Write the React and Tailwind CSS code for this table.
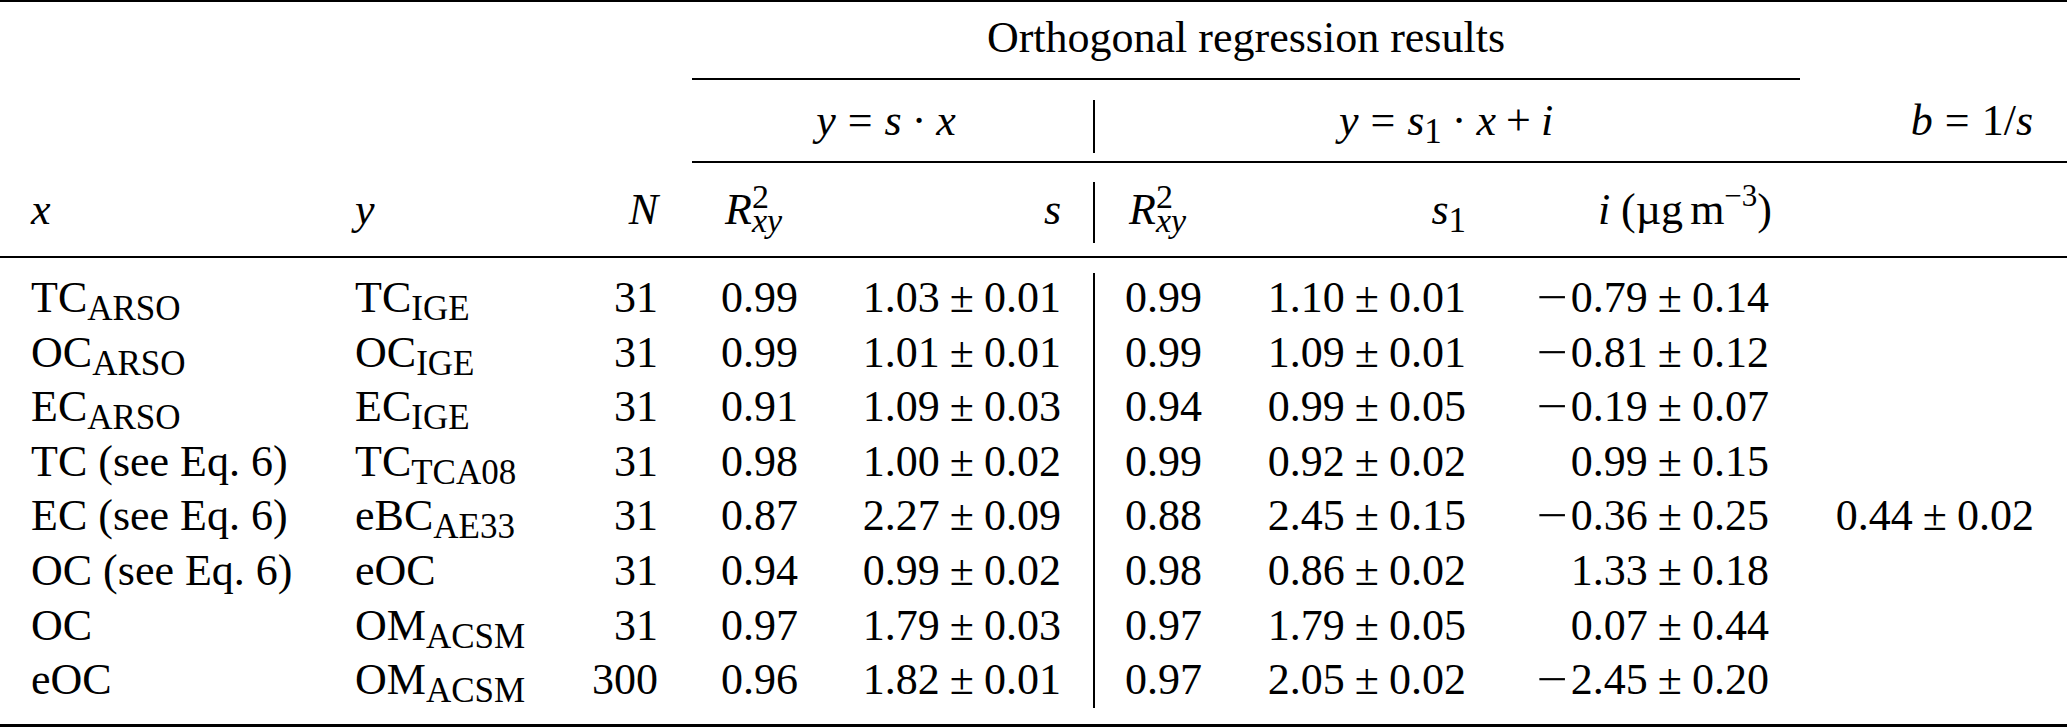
import React from 'react';

// column template shared by every row of the table
const cols = 'grid grid-cols-[340px_220px_110px_130px_280px_28px_132px_250px_310px_267px]';

const rows = [
  { x: ['TC', 'ARSO'], y: ['TC', 'IGE'], n: '31', r1: '0.99', s: ['1.03', '0.01'], r2: '0.99', s1: ['1.10', '0.01'], i: ['−0.79', '0.14'] },
  { x: ['OC', 'ARSO'], y: ['OC', 'IGE'], n: '31', r1: '0.99', s: ['1.01', '0.01'], r2: '0.99', s1: ['1.09', '0.01'], i: ['−0.81', '0.12'] },
  { x: ['EC', 'ARSO'], y: ['EC', 'IGE'], n: '31', r1: '0.91', s: ['1.09', '0.03'], r2: '0.94', s1: ['0.99', '0.05'], i: ['−0.19', '0.07'] },
  { x: ['TC (see Eq. 6)'], y: ['TC', 'TCA08'], n: '31', r1: '0.98', s: ['1.00', '0.02'], r2: '0.99', s1: ['0.92', '0.02'], i: ['0.99', '0.15'] },
  { x: ['EC (see Eq. 6)'], y: ['eBC', 'AE33'], n: '31', r1: '0.87', s: ['2.27', '0.09'], r2: '0.88', s1: ['2.45', '0.15'], i: ['−0.36', '0.25'], b: ['0.44', '0.02'] },
  { x: ['OC (see Eq. 6)'], y: ['eOC'], n: '31', r1: '0.94', s: ['0.99', '0.02'], r2: '0.98', s1: ['0.86', '0.02'], i: ['1.33', '0.18'] },
  { x: ['OC'], y: ['OM', 'ACSM'], n: '31', r1: '0.97', s: ['1.79', '0.03'], r2: '0.97', s1: ['1.79', '0.05'], i: ['0.07', '0.44'] },
  { x: ['eOC'], y: ['OM', 'ACSM'], n: '300', r1: '0.96', s: ['1.82', '0.01'], r2: '0.97', s1: ['2.05', '0.02'], i: ['−2.45', '0.20'] },
];

const Sub = ({ children }) => (
  <span className="text-[35px] leading-[0] align-[-8px]">{children}</span>
);

const Label = ({ parts }) => (
  <>
    {parts[0]}
    {parts[1] && <Sub>{parts[1]}</Sub>}
  </>
);

// the minus in the source is a long math minus sitting tight against the digits
const Num = ({ v }) =>
  v.startsWith('−') ? (
    <>
      <span className="inline-block ml-[6px] mr-[3px] scale-x-125 origin-right">−</span>
      {v.slice(1)}
    </>
  ) : (
    v
  );

const Pm = ({ pair }) => (
  <>
    <Num v={pair[0]} />
    <span className="mx-[10px]">±</span>
    {pair[1]}
  </>
);

const Op = ({ children, wide }) => (
  <span className={wide ? 'mx-[12px]' : 'mx-[10px]'}>{children}</span>
);

const R2 = () => (
  <>
    <span className="italic">R</span>
    <span className="inline-flex flex-col text-[34px] leading-[24px] align-[16px]">
      <span>2</span>
      <span className="italic">xy</span>
    </span>
  </>
);

const Bar = ({ className }) => (
  <div className={'flex justify-center ' + className}>
    <div className="w-[2px] bg-black" />
  </div>
);

export default function App() {
  return (
    <div className="w-[2067px] h-[727px] bg-white text-black font-['Liberation_Serif',serif] text-[44px] flex flex-col overflow-hidden whitespace-nowrap">
      <div className="h-[2px] bg-black" />

      {/* spanner */}
      <div className={`${cols} h-[76px]`}>
        <div className="col-start-4 col-span-6 ml-[22px] text-center leading-[72px]">
          Orthogonal regression results
        </div>
      </div>
      <div className={`${cols} h-[2px]`}>
        <div className="col-start-4 col-span-6 ml-[22px] bg-black" />
      </div>

      {/* model row */}
      <div className={`${cols} h-[81px] leading-[81px]`}>
        <div className="col-start-4 col-span-2 ml-[22px] text-center">
          <span className="italic">y</span>
          <Op wide>=</Op>
          <span className="italic">s</span>
          <Op>·</Op>
          <span className="italic">x</span>
        </div>
        <Bar className="pt-[20px] pb-[8px]" />
        <div className="col-span-3 text-center pr-[16px]">
          <span className="italic">y</span>
          <Op wide>=</Op>
          <span className="italic">s</span>
          <Sub>1</Sub>
          <Op>·</Op>
          <span className="italic">x</span>
          <Op>+</Op>
          <span className="italic">i</span>
        </div>
        <div className="text-right pr-[34px]">
          <span className="italic">b</span>
          <Op wide>=</Op>1/<span className="italic">s</span>
        </div>
      </div>
      <div className={`${cols} h-[2px]`}>
        <div className="col-start-4 col-span-7 ml-[22px] bg-black" />
      </div>

      {/* column headings */}
      <div className={`${cols} h-[93px] leading-[93px]`}>
        <div className="pl-[31px] italic">x</div>
        <div className="pl-[15px] italic">y</div>
        <div className="text-right pr-[12px] italic">N</div>
        <div className="pl-[55px]">
          <R2 />
        </div>
        <div className="text-right pr-[19px] italic">s</div>
        <Bar className="pt-[19px] pb-[13px]" />
        <div className="pl-[21px]">
          <R2 />
        </div>
        <div className="text-right pr-[24px]">
          <span className="italic">s</span>
          <Sub>1</Sub>
        </div>
        <div className="text-right pr-[28px]">
          <span className="italic">i</span> (µg<span className="ml-[7px]">m</span>
          <span className="text-[31px] leading-[0] align-[18px]">−3</span>)
        </div>
        <div />
      </div>
      <div className="h-[2px] bg-black" />

      {/* data */}
      <div className={`${cols} grid-rows-[repeat(8,54.6px)] pt-[13px] pb-[16px] leading-[54.6px]`}>
        <Bar className="col-start-6 row-start-1 row-span-8 pt-[2px]" />
        {rows.map((r, idx) => (
          <React.Fragment key={idx}>
            <div className="pl-[31px]">
              <Label parts={r.x} />
            </div>
            <div className="pl-[15px]">
              <Label parts={r.y} />
            </div>
            <div className="text-right pr-[12px]">{r.n}</div>
            <div className="pl-[51px]">{r.r1}</div>
            <div className="text-right pr-[19px]">
              <Pm pair={r.s} />
            </div>
            <div className="pl-[17px]">{r.r2}</div>
            <div className="text-right pr-[24px]">
              <Pm pair={r.s1} />
            </div>
            <div className="text-right pr-[31px]">
              <Pm pair={r.i} />
            </div>
            <div className="text-right pr-[33px]">{r.b && <Pm pair={r.b} />}</div>
          </React.Fragment>
        ))}
      </div>
      <div className="h-[3px] bg-black" />
    </div>
  );
}
